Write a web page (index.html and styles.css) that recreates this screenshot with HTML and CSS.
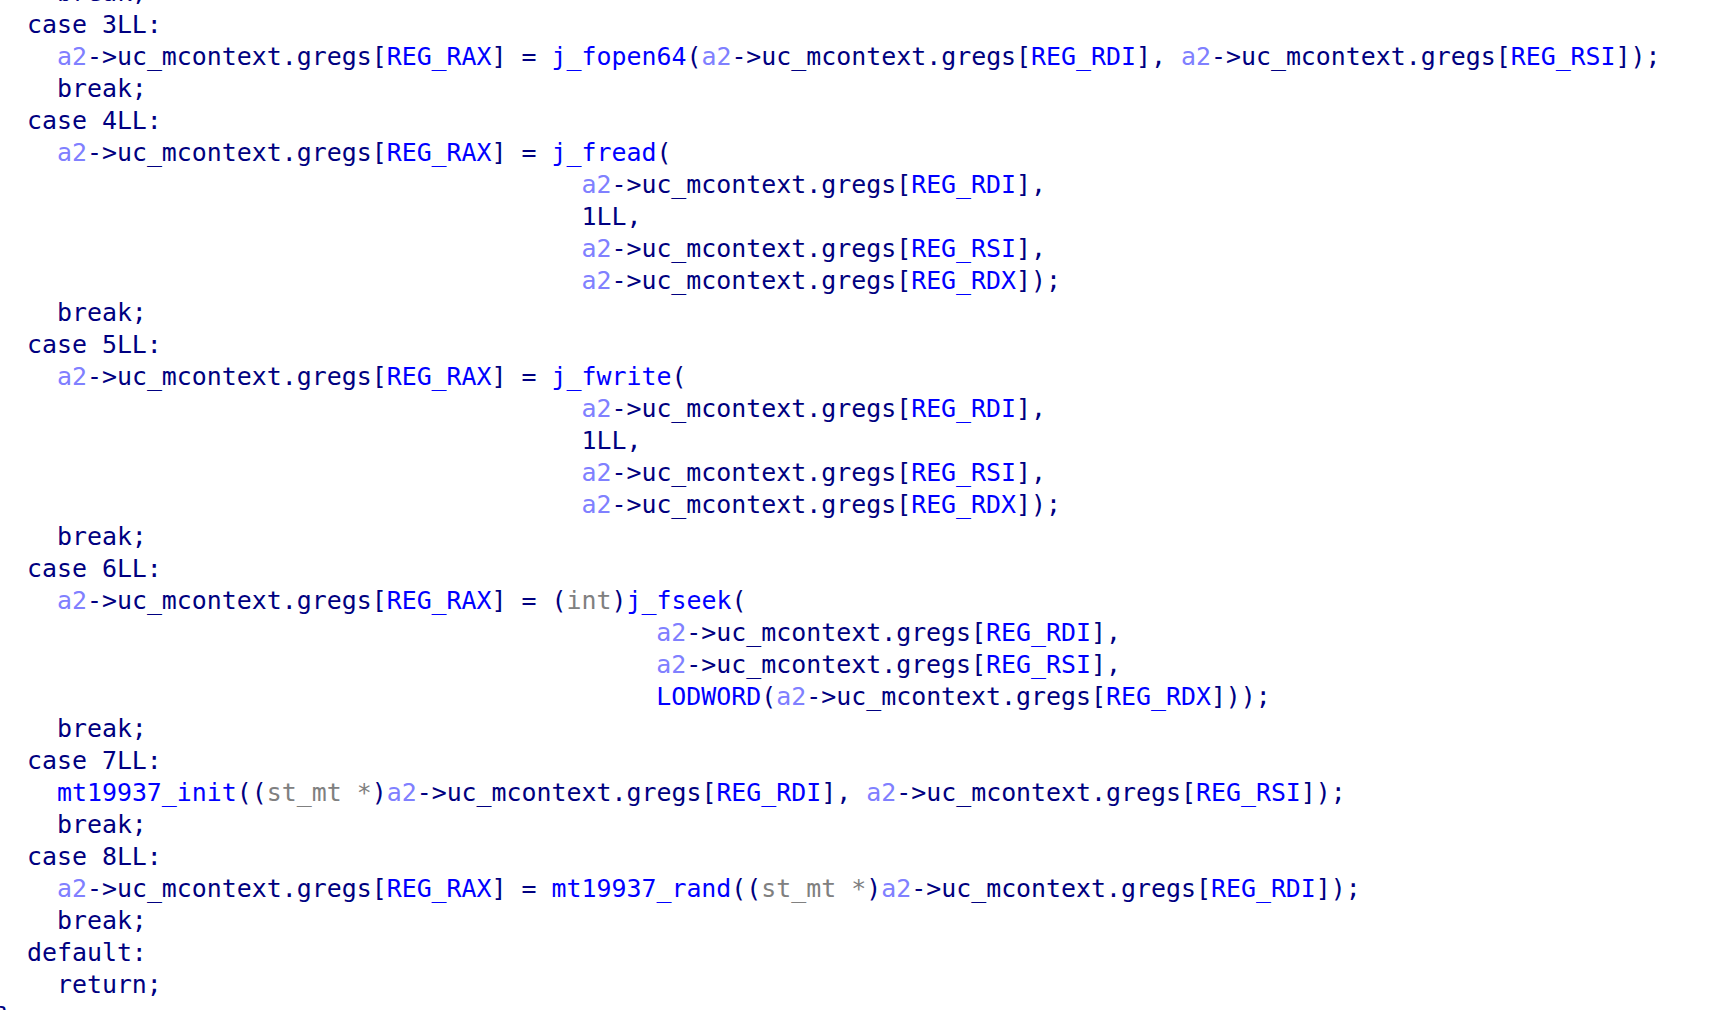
FILE: index.html
```html
<!DOCTYPE html>
<html>
<head>
<meta charset="utf-8">
<link rel="stylesheet" href="styles.css">
</head>
<body>
<div class="code">
<div class="ln">    break;</div>
<div class="ln">  case 3LL:</div>
<div class="ln">    <span class="v">a2</span>-&gt;uc_mcontext.gregs[<span class="c">REG_RAX</span>] = <span class="f">j_fopen64</span>(<span class="v">a2</span>-&gt;uc_mcontext.gregs[<span class="c">REG_RDI</span>], <span class="v">a2</span>-&gt;uc_mcontext.gregs[<span class="c">REG_RSI</span>]);</div>
<div class="ln">    break;</div>
<div class="ln">  case 4LL:</div>
<div class="ln">    <span class="v">a2</span>-&gt;uc_mcontext.gregs[<span class="c">REG_RAX</span>] = <span class="f">j_fread</span>(</div>
<div class="ln">                                       <span class="v">a2</span>-&gt;uc_mcontext.gregs[<span class="c">REG_RDI</span>],</div>
<div class="ln">                                       1LL,</div>
<div class="ln">                                       <span class="v">a2</span>-&gt;uc_mcontext.gregs[<span class="c">REG_RSI</span>],</div>
<div class="ln">                                       <span class="v">a2</span>-&gt;uc_mcontext.gregs[<span class="c">REG_RDX</span>]);</div>
<div class="ln">    break;</div>
<div class="ln">  case 5LL:</div>
<div class="ln">    <span class="v">a2</span>-&gt;uc_mcontext.gregs[<span class="c">REG_RAX</span>] = <span class="f">j_fwrite</span>(</div>
<div class="ln">                                       <span class="v">a2</span>-&gt;uc_mcontext.gregs[<span class="c">REG_RDI</span>],</div>
<div class="ln">                                       1LL,</div>
<div class="ln">                                       <span class="v">a2</span>-&gt;uc_mcontext.gregs[<span class="c">REG_RSI</span>],</div>
<div class="ln">                                       <span class="v">a2</span>-&gt;uc_mcontext.gregs[<span class="c">REG_RDX</span>]);</div>
<div class="ln">    break;</div>
<div class="ln">  case 6LL:</div>
<div class="ln">    <span class="v">a2</span>-&gt;uc_mcontext.gregs[<span class="c">REG_RAX</span>] = (<span class="t">int</span>)<span class="f">j_fseek</span>(</div>
<div class="ln">                                            <span class="v">a2</span>-&gt;uc_mcontext.gregs[<span class="c">REG_RDI</span>],</div>
<div class="ln">                                            <span class="v">a2</span>-&gt;uc_mcontext.gregs[<span class="c">REG_RSI</span>],</div>
<div class="ln">                                            <span class="f">LODWORD</span>(<span class="v">a2</span>-&gt;uc_mcontext.gregs[<span class="c">REG_RDX</span>]));</div>
<div class="ln">    break;</div>
<div class="ln">  case 7LL:</div>
<div class="ln">    <span class="f">mt19937_init</span>((<span class="t">st_mt *</span>)<span class="v">a2</span>-&gt;uc_mcontext.gregs[<span class="c">REG_RDI</span>], <span class="v">a2</span>-&gt;uc_mcontext.gregs[<span class="c">REG_RSI</span>]);</div>
<div class="ln">    break;</div>
<div class="ln">  case 8LL:</div>
<div class="ln">    <span class="v">a2</span>-&gt;uc_mcontext.gregs[<span class="c">REG_RAX</span>] = <span class="f">mt19937_rand</span>((<span class="t">st_mt *</span>)<span class="v">a2</span>-&gt;uc_mcontext.gregs[<span class="c">REG_RDI</span>]);</div>
<div class="ln">    break;</div>
<div class="ln">  default:</div>
<div class="ln">    return;</div>
<div class="ln">}</div>
</div>
</body>
</html>
```
FILE: styles.css
```css
html, body {
  margin: 0;
  padding: 0;
  background: #ffffff;
  overflow: hidden;
}
.code {
  margin-top: -23px;
  margin-left: -3px;
  font-family: "DejaVu Sans Mono", "Liberation Mono", monospace;
  font-size: 24.9px;
  line-height: 32px;
  color: #000080;
}
.ln {
  white-space: pre;
  height: 32px;
}
.v { color: #8080ff; }
.c { color: #0000ff; }
.f { color: #0000ff; }
.t { color: #808080; }
```
